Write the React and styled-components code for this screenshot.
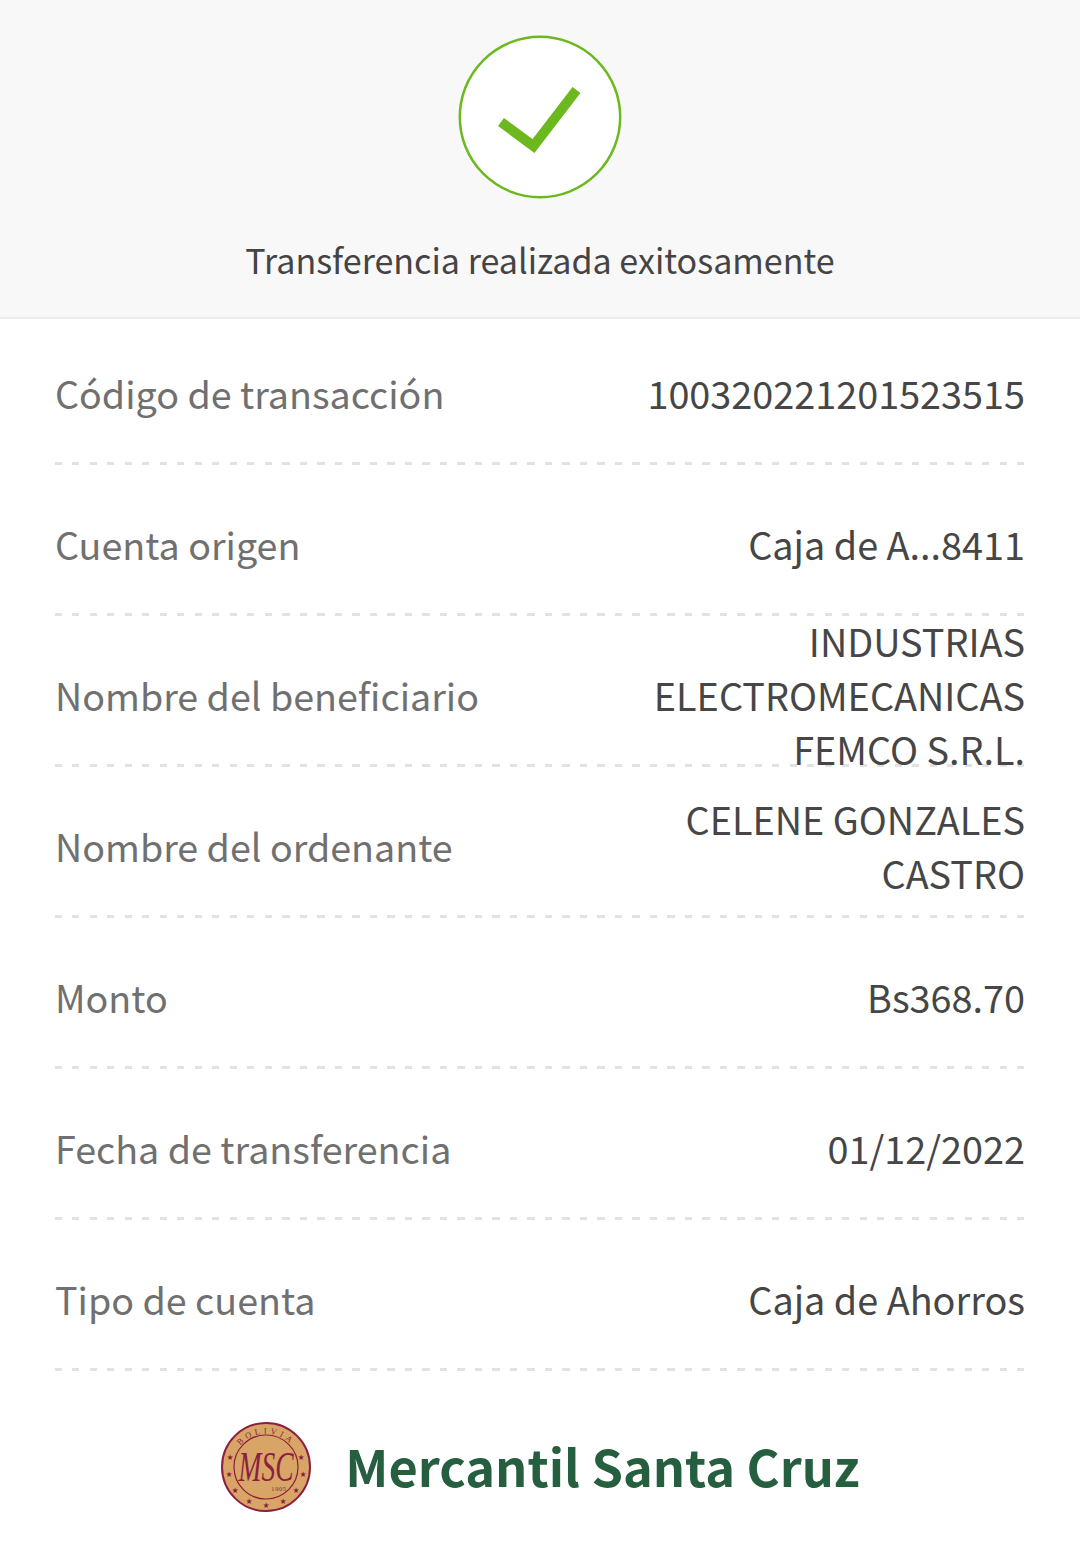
import React from 'react';
import styled, { createGlobalStyle } from 'styled-components';

const Global = createGlobalStyle`
  html, body { margin: 0; padding: 0; background: #fff; }
  body { font-family: "Noto Sans CJK SC", "Noto Sans", sans-serif; }
`;
const Page = styled.div`
  width: 1080px; height: 1559px; background: #fff; overflow: hidden;
`;
const Header = styled.header`
  height: 319px; box-sizing: border-box; background: #f8f8f8;
  border-bottom: 2px solid #ececec;
  display: flex; flex-direction: column; align-items: center;
  padding-top: 35px;
`;
const Badge = styled.svg`
  width: 166px; height: 166px; display: block; margin-left: -2px;
`;
const Title = styled.h1`
  margin: 32px 0 0; font-size: 34.05px; line-height: 54px; font-weight: 400; color: #444;
`;
const List = styled.section`
  padding: 0 55px;
`;
const Row = styled.div`
  height: 151px; box-sizing: border-box; position: relative;
  display: flex; align-items: center; justify-content: space-between;
  padding-bottom: 4px; gap: 24px;
  &::after {
    content: ""; position: absolute; left: 0; right: 0; bottom: 5px; height: 3px;
    background: repeating-linear-gradient(90deg, #e2e2e2 0 7px, transparent 7px 17.5px);
  }
`;
const Label = styled.span`
  font-size: 37.65px; line-height: 54px; color: #707070; white-space: nowrap;
`;
const Value = styled.span`
  font-size: 37.8px; line-height: 54px; color: #464646; text-align: right;
  max-width: 400px; flex: none; position: relative; z-index: 1;
`;
const Footer = styled.footer`
  display: flex; align-items: center; justify-content: center; gap: 33px;
  margin-top: 45px;
`;
const Seal = styled.svg`
  width: 92px; height: 92px; display: block; flex: none;
`;
const Brand = styled.span`
  font-size: 50.5px; line-height: 88px; height: 92px; font-weight: 700; color: #255f3f; white-space: nowrap;
`;

const rows = [
  ['Código de transacción', '100320221201523515'],
  ['Cuenta origen', 'Caja de A...8411'],
  ['Nombre del beneficiario', 'INDUSTRIAS ELECTROMECANICAS FEMCO S.R.L.'],
  ['Nombre del ordenante', 'CELENE GONZALES CASTRO'],
  ['Monto', 'Bs368.70'],
  ['Fecha de transferencia', '01/12/2022'],
  ['Tipo de cuenta', 'Caja de Ahorros'],
];

const stars = [[-36, -10], [-37, 7], [-31, 23], [-17, 34], [0, 38], [17, 34], [30, 23], [37, 7], [35, -10]];

function MscSeal() {
  return (
    <Seal viewBox="0 0 92 92">
      <defs>
        <path id="arc" d="M12.5 46 A33.5 33.5 0 0 1 79.5 46" />
      </defs>
      <circle cx="46" cy="46" r="44" fill="#d8a566" stroke="#8c1f3f" strokeWidth="2" />
      <circle cx="46" cy="46" r="32" fill="none" stroke="#8c1f3f" strokeWidth="1.2" />
      <text fontFamily="Liberation Serif, serif" fontSize="8.5" fill="#8c1f3f" letterSpacing="3.4">
        <textPath href="#arc" startOffset="50%" textAnchor="middle">BOLIVIA</textPath>
      </text>
      {stars.map(([dx, dy]) => (
        <text key={`${dx}${dy}`} x={46 + dx} y={46 + dy + 2.8} textAnchor="middle" fontSize="8" fill="#8c1f3f" fontFamily="DejaVu Sans, sans-serif">★</text>
      ))}
      <text x="46" y="60" textAnchor="middle" fontFamily="Liberation Serif, serif" fontStyle="italic" fontSize="42" fill="#8c1f3f" textLength="55" lengthAdjust="spacingAndGlyphs">MSC</text>
      <text x="59" y="69.5" textAnchor="middle" fontFamily="Liberation Serif, serif" fontSize="6.5" fill="#8c1f3f" letterSpacing="0.6">1905</text>
    </Seal>
  );
}

export default function App() {
  return (
    <Page>
      <Global />
      <Header>
        <Badge viewBox="0 0 166 166">
          <circle cx="84" cy="82" r="80.2" fill="#fff" stroke="#6cb81f" strokeWidth="2.5" />
          <path d="M45 87 L77.5 111 L120.5 55" fill="none" stroke="#6cb81f" strokeWidth="10" strokeLinejoin="miter" />
        </Badge>
        <Title>Transferencia realizada exitosamente</Title>
      </Header>
      <List>
        {rows.map(([l, v]) => (
          <Row key={l}>
            <Label>{l}</Label>
            <Value>{v}</Value>
          </Row>
        ))}
      </List>
      <Footer>
        <MscSeal />
        <Brand>Mercantil Santa Cruz</Brand>
      </Footer>
    </Page>
  );
}
